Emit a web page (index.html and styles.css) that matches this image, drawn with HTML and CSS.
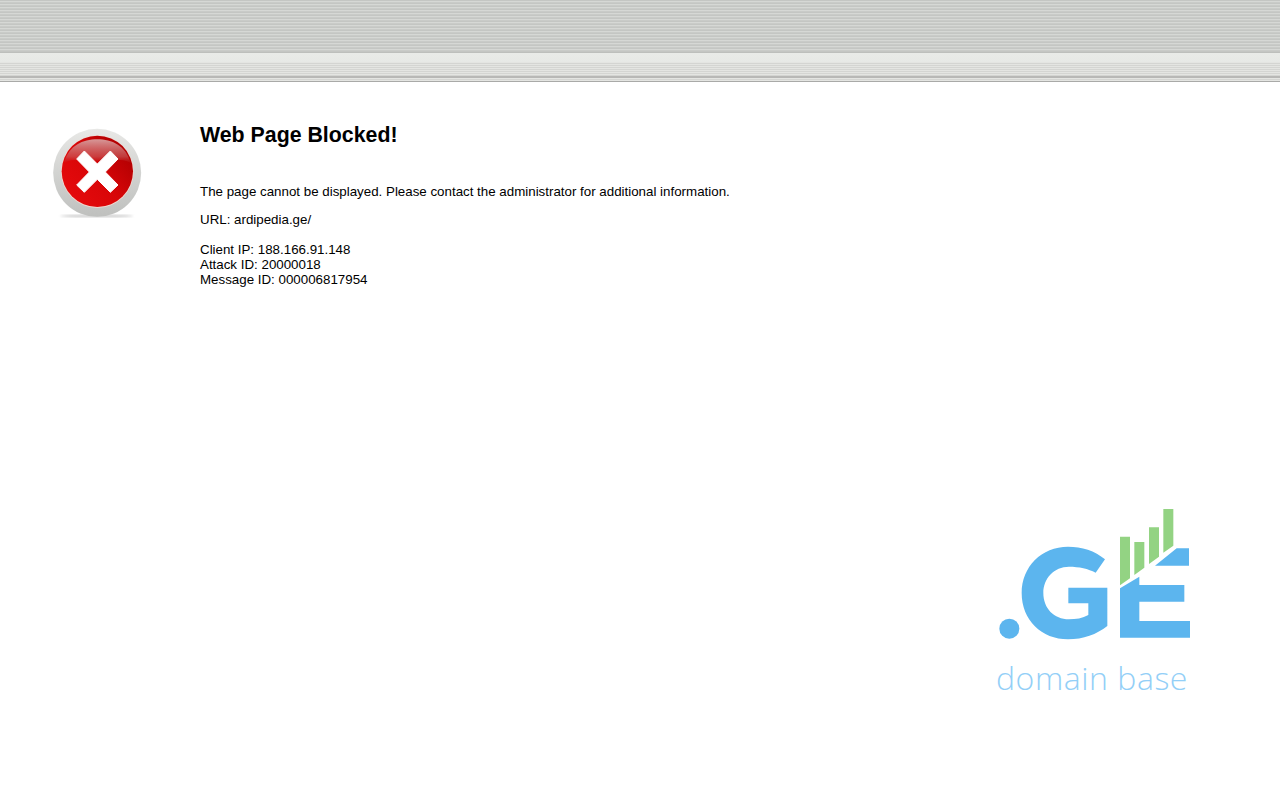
FILE: index.html
```html
<!DOCTYPE html>
<html lang="en">
<head>
<meta charset="utf-8">
<title>Web Page Blocked!</title>
<link rel="stylesheet" href="styles.css">
</head>
<body>
<header class="banner">
  <div class="banner-top"></div>
  <div class="banner-bottom"></div>
</header>
<main class="main">
  <div class="icon-col">
    <svg class="stop-icon" width="115" height="110" viewBox="0 0 345 330" aria-hidden="true">
      <defs>
        <linearGradient id="red" x1="0.15" y1="0.85" x2="0.9" y2="0.25">
          <stop offset="0" stop-color="#e40a0c"/>
          <stop offset="0.5" stop-color="#d80608"/>
          <stop offset="1" stop-color="#b40002"/>
        </linearGradient>
        <linearGradient id="ring" x1="0" y1="0" x2="0" y2="1">
          <stop offset="0" stop-color="#e8e8e6"/>
          <stop offset="0.5" stop-color="#d2d3d1"/>
          <stop offset="1" stop-color="#bfc0be"/>
        </linearGradient>
        <linearGradient id="gloss" x1="0" y1="0" x2="0" y2="1">
          <stop offset="0" stop-color="#d8a0a0" stop-opacity=".95"/>
          <stop offset="0.75" stop-color="#c86060" stop-opacity=".6"/>
          <stop offset="1" stop-color="#c03030" stop-opacity=".15"/>
        </linearGradient>
        <filter id="soft"><feGaussianBlur stdDeviation="3"/></filter>
      </defs>
      <ellipse cx="170" cy="288" rx="110" ry="4" fill="#ccc" filter="url(#soft)"/>
      <circle cx="171.500" cy="158.500" r="132" fill="url(#ring)"/>
      <circle cx="172" cy="155" r="109" fill="#f0d8d0"/>
      <circle cx="172" cy="154" r="107" fill="url(#red)"/>
      <path d="M72 128C88 76 128 58 172 58s84 18 100 70C240 112 205 122 172 122s-68-10-100 6z" fill="url(#gloss)"/>
      <path d="M133 93L172 132 211 93 234 117 196 156 234 195 211 217 172 178 133 217 110 195 148 156 110 117z" fill="#fff" stroke="#fff" stroke-width="3" stroke-linejoin="round"/>
    </svg>
  </div>
  <div class="message">
    <h1 class="title">Web Page Blocked!</h1>
    <p class="line">The page cannot be displayed. Please contact the administrator for additional information.</p>
    <p class="line url">URL: ardipedia.ge/</p>
    <p class="line ids">Client IP: 188.166.91.148<br>Attack ID: 20000018<br>Message ID: 000006817954</p>
  </div>
</main>
<aside class="logo">
  <svg class="logo-mark" width="215" height="150" viewBox="0 0 645 450" aria-label=".GE">
    <circle cx="73" cy="386" r="30" fill="#5cb5ee"/>
    <path fill="#5cb5ee" d="M360 178C330 152 290 140 249 140C170 140 110 200 110 279C110 360 170 418 249 418C295 418 335 403 367 378L367 263L250 263L250 310L310 310L310 345C293 355 272 358 252 358C207 358 175 325 175 279C175 235 207 200 252 200C282 200 310 206 332 218Z"/>
    <path fill="#5cb5ee" d="M510 197L575 145L612 145L612 197ZM405 265L463 230L463 255L598 255L598 305L463 305L463 363L615 363L615 413L405 413Z"/>
    <path fill="#93d383" d="M405 110H435V235L405 256ZM448 126H478V203L448 225ZM492 82H522V170L492 192ZM535 27H565V137L535 158Z"/>
  </svg>
  <div class="logo-text">domain base</div>
</aside>
</body>
</html>
```

FILE: styles.css
```css
html, body {
  margin: 0;
  padding: 0;
  background: #fff;
}
body {
  height: 800px;
  overflow: hidden;
  font-family: "Liberation Sans", Arial, sans-serif;
  font-size: 13.33px;
  color: #000;
}
.banner {
  height: 82px;
  box-sizing: border-box;
  border-bottom: 1px solid #a9aaa8;
}
.banner-top {
  height: 53px;
  box-sizing: border-box;
  border-bottom: 1px solid #bdbfbc;
  background: repeating-linear-gradient(180deg, #c4c6c3 0, #c4c6c3 1px, #d6d8d5 1px, #d6d8d5 2px, #c9cbc8 2px, #c9cbc8 3px);
}
.banner-bottom {
  height: 28px;
  background:
    linear-gradient(180deg, #e9ebe8 0, #e7e9e6 9px, transparent 9px),
    linear-gradient(180deg, transparent 23px, #b8b8b6 23px, #b8b8b6 25px, transparent 25px),
    repeating-linear-gradient(180deg, #d4d5d2 0, #d4d5d2 1px, #e4e5e2 1px, #e4e5e2 2px);
}
.main {
  display: flex;
  height: 418px;
}
.icon-col {
  width: 200px;
  flex: none;
  padding: 38px 0 0 40px;
  box-sizing: border-box;
}
.stop-icon {
  display: block;
}
.message {
  padding-top: 41px;
}
.title {
  margin: 0 0 37px;
  font-size: 21.33px;
  line-height: 24px;
  font-weight: bold;
}
.line {
  margin: 0;
  line-height: 15px;
}
.url {
  margin-top: 13px;
}
.ids {
  margin-top: 15px;
}
.logo {
  width: 215px;
  margin-left: 985px;
}
.logo-mark {
  display: block;
}
.logo-text {
  margin-top: 6px;
  padding-left: 11px;
  font-family: "Open Sans", sans-serif;
  font-size: 32px;
  line-height: 44px;
  font-weight: 300;
  letter-spacing: 0.55px;
  color: #93cff7;
  white-space: nowrap;
}
```
